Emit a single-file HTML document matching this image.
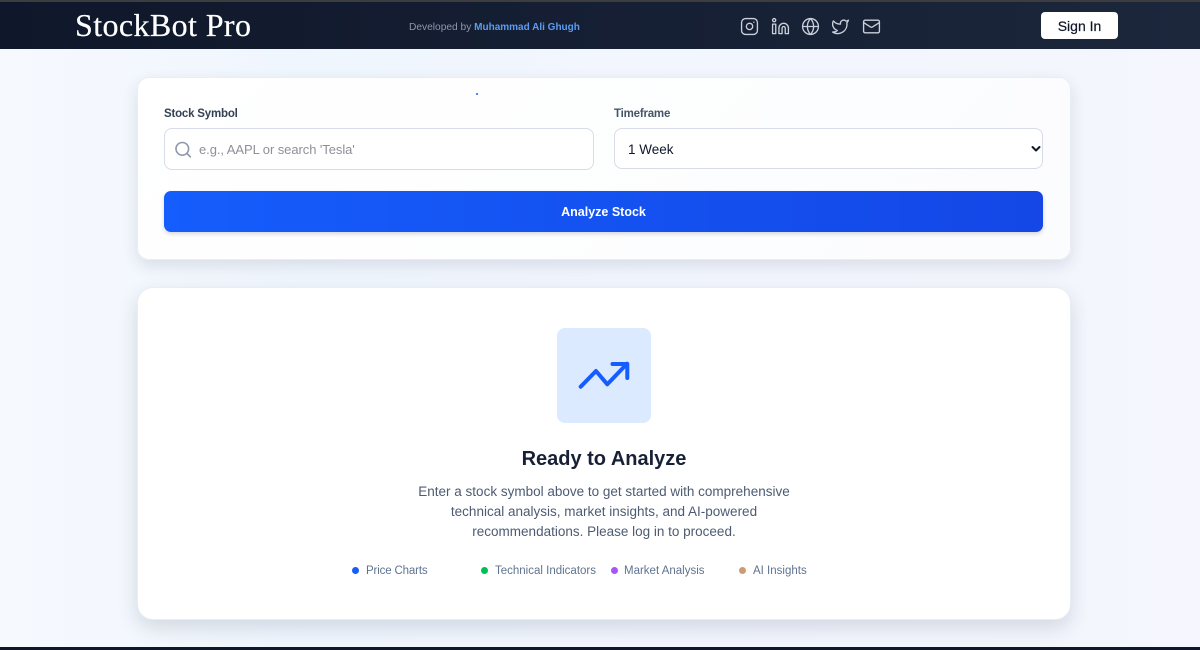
<!DOCTYPE html>
<html lang="en"><head><meta charset="utf-8"><title>StockBot Pro</title>
<style>
*{box-sizing:border-box;margin:0;padding:0}
html,body{width:1200px;height:650px;overflow:hidden}
body{position:relative;background:linear-gradient(90deg,#f6f9fe 0%,#f0f6fe 25%,#f3f6fe 70%,#f5f6fe 100%);font-family:"Liberation Sans","Noto Sans CJK JP",sans-serif}
.a{position:absolute;white-space:nowrap}
.top{left:0;top:0;width:1200px;height:2px;background:#3d3d3f}
.hdr{left:0;top:2px;width:1200px;height:47px;background:linear-gradient(90deg,#0f172a,#1c273c)}
.bot{left:0;top:647px;width:1200px;height:3px;background:#0f172a}
.brand{left:75px;top:6px;font:32px/38px "Liberation Serif",serif;color:#fff;letter-spacing:.4px;-webkit-text-stroke:.2px #fff}
.dev{left:409px;top:21px;font-size:10.2px;line-height:14px;color:#8d98ab}
.dev b{color:#5b9cf0;font-size:10px}
.ic{top:16.500px;width:19px;height:19px;fill:none;stroke:#c9d0db;stroke-width:1.700;stroke-linecap:round;stroke-linejoin:round}
.sign{left:1041px;top:12px;width:77px;height:27px;background:#fff;border-radius:4px;text-align:center;font-size:14px;line-height:28px;color:#0f172a;-webkit-text-stroke:.2px #0f172a}
.card{background:linear-gradient(135deg,#fff,#fbfcfe);border:1px solid #e9edf5;box-shadow:0 6px 16px rgba(30,41,59,.12)}
.c1{left:137px;top:77px;width:934px;height:183px;border-radius:12px}
.c2{left:137px;top:287px;width:934px;height:333px;border-radius:16px;background:#fff;box-shadow:0 8px 20px rgba(30,41,59,.15)}
.lbl{top:106px;font-size:11.500px;line-height:16px;font-weight:bold;color:#334155;letter-spacing:-.2px}
.field{top:128px;height:42px;background:#fff;border:1px solid #d8dbe8;border-radius:8px}
.ph{left:199px;top:141px;font-size:13px;line-height:18px;color:#8f8f99;letter-spacing:-.07px}
.wk{left:628px;top:141px;font-size:13.500px;line-height:18px;color:#0f172a}
.btn{left:164px;top:191px;width:879px;height:41px;border-radius:7px;background:linear-gradient(90deg,#155dfc,#1447e6);box-shadow:0 2px 4px rgba(30,41,59,.18);color:#fff;text-align:center;font-size:12.500px;font-weight:bold;line-height:42px}
.box{left:557px;top:328px;width:94px;height:95px;border-radius:8px;background:#dbeafe}
h2{left:0;top:445px;width:1208px;text-align:center;font-size:20px;line-height:28px;color:#172036}
.p{left:0;width:1208px;text-align:center;font-size:13.500px;line-height:20px;color:#4d5b72}
.dot{top:567px;width:7px;height:7px;border-radius:50%}
.t{top:563.500px;font-size:11.500px;line-height:15px;color:#5f7391}
</style></head><body>
<div class="a top"></div>
<div class="a hdr"></div>
<div class="a brand">StockBot Pro</div>
<div class="a dev">Developed by <b>Muhammad Ali Ghugh</b></div>
<svg class="a ic" style="left:740px" viewBox="0 0 24 24"><rect x="2" y="2" width="20" height="20" rx="5"/><path d="M16 11.370A4 4 0 1 1 12.630 8 4 4 0 0 1 16 11.370z"/><path d="M17.500 6.500h.01"/></svg>
<svg class="a ic" style="left:770.500px" viewBox="0 0 24 24"><path d="M16 8a6 6 0 0 1 6 6v7h-4v-7a2 2 0 0 0-2-2 2 2 0 0 0-2 2v7h-4v-7a6 6 0 0 1 6-6z"/><rect x="2" y="9" width="4" height="12"/><circle cx="4" cy="4" r="2"/></svg>
<svg class="a ic" style="left:801px" viewBox="0 0 24 24"><circle cx="12" cy="12" r="10"/><path d="M2 12h20"/><path d="M12 2a15.300 15.300 0 0 1 4 10 15.300 15.300 0 0 1-4 10 15.300 15.300 0 0 1-4-10 15.300 15.300 0 0 1 4-10z"/></svg>
<svg class="a ic" style="left:831px" viewBox="0 0 24 24"><path d="M22 4s-.7 2.100-2 3.400c1.600 10-9.400 17.300-18 11.600 2.200.1 4.400-.6 6-2C3 15.500.5 9.600 3 5c2.200 2.600 5.600 4.100 9 4-.9-4.200 4-6.600 7-3.800 1.100 0 3-1.200 3-1.200z"/></svg>
<svg class="a ic" style="left:862px" viewBox="0 0 24 24"><rect x="2" y="4" width="20" height="16" rx="2"/><path d="m22 7-8.970 5.700a1.940 1.940 0 0 1-2.060 0L2 7"/></svg>
<div class="a sign">Sign In</div>

<div class="a card c1"></div>
<div class="a" style="left:476px;top:93px;width:2px;height:2px;border-radius:50%;background:#155dfc"></div>
<div class="a lbl" style="left:164px">Stock Symbol</div>
<div class="a lbl" style="left:614px;color:#475569">Timeframe</div>
<div class="a field" style="left:164px;width:430px"></div>
<svg class="a" style="left:174px;top:139px;width:18px;height:20px;fill:none;stroke:#8e98a8;stroke-width:1.600;stroke-linecap:round" viewBox="0 0 18 20"><circle cx="8.300" cy="9.800" r="6.300"/><path d="M13 14.500l3.300 3.300"/></svg>
<div class="a ph">e.g., AAPL or search 'Tesla'</div>
<div class="a field" style="left:614px;width:429px;height:41px"></div>
<div class="a wk">1 Week</div>
<svg class="a" style="left:1031px;top:145px;width:10px;height:8px;fill:none;stroke:#111827;stroke-width:2;stroke-linecap:round;stroke-linejoin:round" viewBox="0 0 10 8"><path d="M1.500 2l3.500 3.500L8.500 2"/></svg>
<div class="a btn">Analyze Stock</div>

<div class="a card c2"></div>
<div class="a box"></div>
<svg class="a" style="left:575px;top:358px;width:58px;height:34px;fill:none;stroke:#155dfc;stroke-width:4;stroke-linecap:round;stroke-linejoin:round" viewBox="0 0 58 34"><path d="M5.700 28.700L21 13l11.300 13.300L52 5.800"/><path d="M37.500 6H52.300V20"/></svg>
<h2 class="a">Ready to Analyze</h2>
<div class="a p" style="top:482px">Enter a stock symbol above to get started with comprehensive</div>
<div class="a p" style="top:502px">technical analysis, market insights, and AI-powered</div>
<div class="a p" style="top:522px">recommendations. Please log in to proceed.</div>
<div class="a dot" style="left:352px;background:#155dfc"></div><div class="a t" style="left:366px;letter-spacing:-.15px">Price Charts</div>
<div class="a dot" style="left:481px;background:#00c04f"></div><div class="a t" style="left:495px">Technical Indicators</div>
<div class="a dot" style="left:611px;background:#a855f7"></div><div class="a t" style="left:624px">Market Analysis</div>
<div class="a dot" style="left:739px;background:#cd9a78"></div><div class="a t" style="left:753px">AI Insights</div>
<div class="a bot"></div>
</body></html>
